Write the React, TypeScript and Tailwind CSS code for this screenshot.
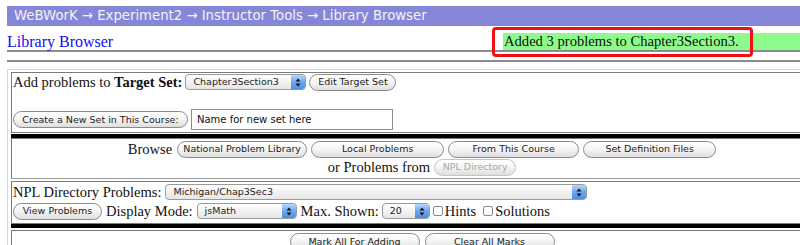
import React from "react";

const sans = "font-['DejaVu_Sans',sans-serif]";
const serif = "font-['Liberation_Serif',serif]";
const txt = `${serif} text-[14.5px] leading-none text-[#111]`;

const Btn = ({
  children,
  className = "",
  disabled = false,
}: {
  children: React.ReactNode;
  className?: string;
  disabled?: boolean;
}) => (
  <button
    type="button"
    className={`${sans} flex h-[17px] shrink-0 items-center justify-center whitespace-nowrap rounded-full border border-[#8a8a8a] bg-linear-to-b from-white via-[#f4f4f4] to-[#dedede] px-[6px] text-[9.5px] leading-none ${
      disabled ? "border-[#c4c4c4] text-[#a8a8a8]" : "text-[#1c1c1c]"
    } ${className}`}
  >
    {children}
  </button>
);

const Select = ({ value, className = "" }: { value: string; className?: string }) => (
  <div
    className={`${sans} relative flex h-[16px] shrink-0 items-center rounded-[4px] border border-[#9a9a9a] bg-linear-to-b from-white to-[#e6e6e6] pl-[7px] text-[9.5px] leading-none text-[#1c1c1c] ${className}`}
  >
    {value}
    <span className="absolute top-0 right-0 bottom-0 flex w-[14px] items-center justify-center rounded-r-[3px] bg-linear-to-b from-[#b8d8fb] via-[#6ea7ec] to-[#4a8ee6]">
      <svg width="6" height="9" viewBox="0 0 6 9">
        <path d="M3 0.5 L5.5 3.5 H0.5 Z" fill="#111" />
        <path d="M3 8.5 L5.5 5.5 H0.5 Z" fill="#111" />
      </svg>
    </span>
  </div>
);

const Check = ({ label }: { label: string }) => (
  <span className={`${txt} flex items-center`}>
    <span className="mr-[2px] inline-block h-[10px] w-[10px] rounded-[2px] border border-[#8a8a8a] bg-white" />
    {label}
  </span>
);

export default function App() {
  return (
    <div className="relative h-[245px] w-[800px] overflow-hidden bg-white">
      <div className="w-[833px]">
        <div className={`${sans} mt-[6px] ml-[7px] flex h-[20px] items-center bg-[#8686d8] pl-[7px] text-[13.25px] text-[#f2f2f8]`}>
          WeBWorK → Experiment2 → Instructor Tools → Library Browser
        </div>

        <div className={`${serif} mt-[7px] ml-[7px] flex h-[17px] items-center leading-none`}>
          <span className="w-[496px] text-[16px] text-[#1010f0]">Library Browser</span>
          <div className="flex h-[17px] flex-1 items-center bg-[#8cfb8c] pl-[1px] text-[14.6px] text-[#111]">
            Added 3 problems to Chapter3Section3.
          </div>
        </div>

        <div className="ml-[7px] h-[2px] bg-[#8c8c8c]" />
        <div className="mt-[8px] ml-[7px] h-[2px] bg-[#8c8c8c]" />

        <div className="mt-[7px] ml-[7px] border-t border-l border-[#d6d6d6] pt-[2px] pl-[3px]">
          <div className="h-[61px] border border-[#7a7a7a] pl-[1px]">
            <div className="flex h-[18px] items-center">
              <span className={txt}>
                Add problems to <b>Target Set:</b>
              </span>
              <Select value="Chapter3Section3" className="ml-[3px] w-[121px]" />
              <Btn className="ml-[3px] w-[87px]">Edit Target Set</Btn>
            </div>
            <div className="mt-[18px] flex h-[21px] items-center">
              <Btn className="w-[175px]">Create a New Set in This Course:</Btn>
              <input
                defaultValue="Name for new set here"
                className={`${sans} ml-[3px] h-[21px] w-[202px] border border-[#8c8c8c] px-[5px] text-[10px] text-[#111] outline-none`}
              />
            </div>
          </div>

          <div className="mt-[1px] h-[4px] bg-black" />

          <div className="h-[41px] border border-[#7a7a7a] border-b-[#9a9a9a] pt-[1px]">
            <div className="flex h-[18px] items-center justify-center gap-[4px]">
              <span className={`${txt} mr-[1px]`}>Browse</span>
              <Btn className="w-[130px]">National Problem Library</Btn>
              <Btn className="w-[133px]">Local Problems</Btn>
              <Btn className="w-[131px]">From This Course</Btn>
              <Btn className="w-[133px]">Set Definition Files</Btn>
            </div>
            <div className="flex h-[18px] items-center justify-center gap-[4px]">
              <span className={txt}>or Problems from</span>
              <Btn disabled className="w-[82px]">NPL Directory</Btn>
            </div>
          </div>

          <div className="mt-[2px] h-[43px] border border-[#7a7a7a] pt-[2px] pl-[1px]">
            <div className="flex h-[16px] items-center">
              <span className={txt}>NPL Directory Problems:</span>
              <Select value="Michigan/Chap3Sec3" className="ml-[4px] w-[422px]" />
            </div>
            <div className="mt-[2px] flex h-[18px] items-center">
              <Btn className="w-[89px]">View Problems</Btn>
              <span className={`${txt} ml-[4px]`}>Display Mode:</span>
              <Select value="jsMath" className="ml-[4px] w-[100px]" />
              <span className={`${txt} ml-[4px]`}>Max. Shown:</span>
              <Select value="20" className="ml-[3px] w-[48px]" />
              <span className="ml-[3px]">
                <Check label="Hints" />
              </span>
              <span className="ml-[7px]">
                <Check label="Solutions" />
              </span>
            </div>
          </div>

          <div className="h-[4px] bg-black" />

          <div className="mt-[2px] h-[40px] border border-[#7a7a7a] pt-[2px]">
            <div className="flex items-center justify-center gap-[5px]">
              <Btn className="w-[130px]">Mark All For Adding</Btn>
              <Btn className="w-[130px]">Clear All Marks</Btn>
            </div>
          </div>
        </div>
      </div>

      <div className="absolute top-[27px] left-[492px] h-[30px] w-[261px] rounded-[4px] border-[3px] border-[#ee1111]" />
    </div>
  );
}
